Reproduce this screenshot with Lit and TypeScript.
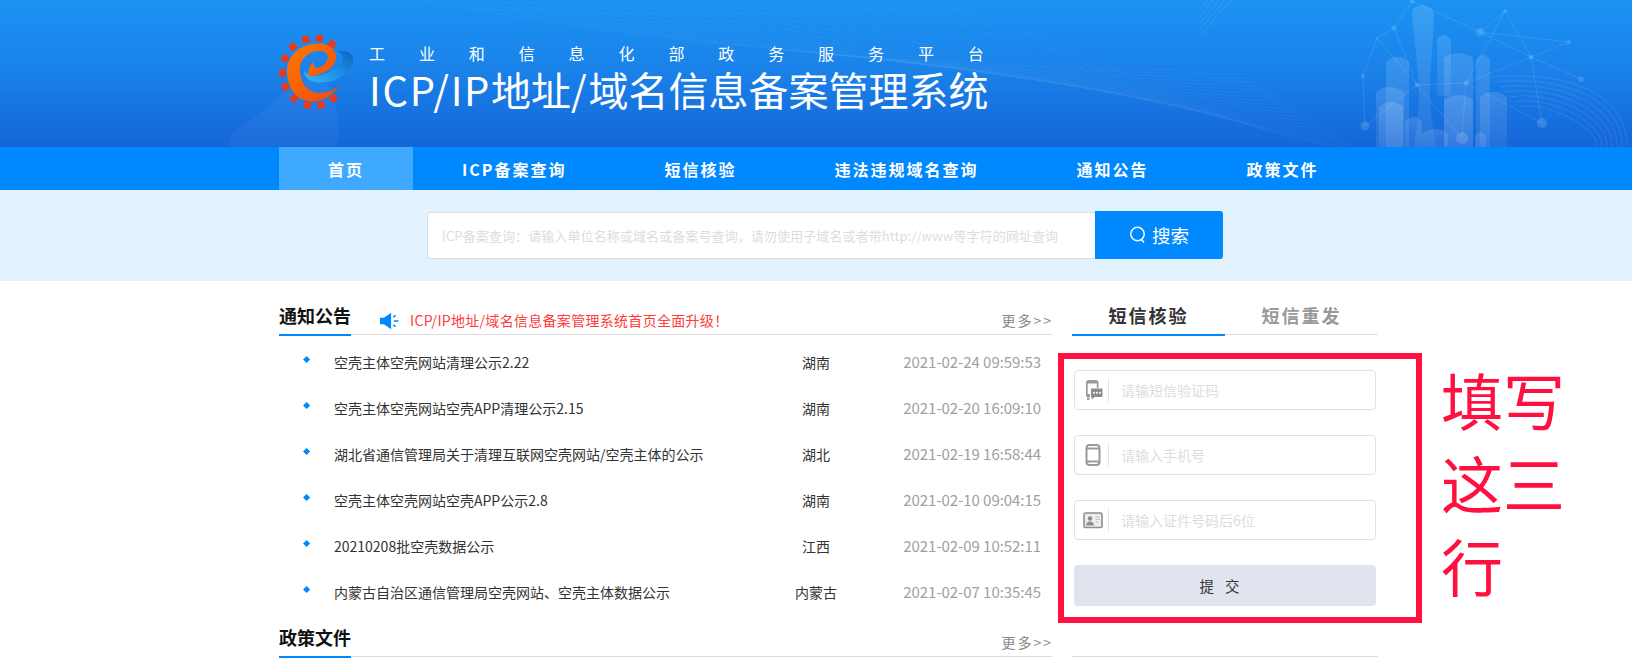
import { LitElement, html, css, svg } from "lit";
import { customElement } from "lit/decorators.js";

const NAV = ["首页", "ICP备案查询", "短信核验", "违法违规域名查询", "通知公告", "政策文件"];
const ROWS = [
  ["空壳主体空壳网站清理公示2.22", "湖南", "2021-02-24 09:59:53"],
  ["空壳主体空壳网站空壳APP清理公示2.15", "湖南", "2021-02-20 16:09:10"],
  ["湖北省通信管理局关于清理互联网空壳网站/空壳主体的公示", "湖北", "2021-02-19 16:58:44"],
  ["空壳主体空壳网站空壳APP公示2.8", "湖南", "2021-02-10 09:04:15"],
  ["20210208批空壳数据公示", "江西", "2021-02-09 10:52:11"],
  ["内蒙古自治区通信管理局空壳网站、空壳主体数据公示", "内蒙古", "2021-02-07 10:35:45"],
];
const SQUARES = [
  [26.7, 4.3], [40.3, 3.3], [53, 9], [14, 11.7], [6, 23.3], [3, 38],
  [6.3, 51.7], [15, 63.3], [28.3, 70], [42, 70], [54.3, 63.3],
];
const NODES: [number, number, number][] = [
  [212, 1, 2.5], [305, 11, 2], [280, 32, 4], [369, 42, 2], [331, 57, 2.5], [194, 28, 2.5],
  [177, 38, 1], [163, 76, 2], [266, 83, 2.5], [381, 79, 3], [342, 123, 5], [165, 126, 4.5],
  [262, 138, 6], [217, 85, 2.5],
];
const EDGES = [
  [0, 5], [5, 6], [6, 7], [7, 11], [0, 2], [2, 1], [2, 3], [3, 4], [4, 8], [8, 13], [13, 11],
  [6, 13], [2, 4], [4, 9], [8, 10], [1, 4], [13, 12], [8, 12], [4, 10], [5, 13], [1, 8],
];
const BLDG: [number, number, number, number][] = [
  [186, 58, 23, 89], [237, 36, 14, 60], [244, 54, 29, 93], [276, 56, 14, 91],
  [176, 88, 28, 59], [179, 103, 24, 44], [244, 96, 29, 51], [280, 93, 27, 54],
  [205, 118, 17, 29], [222, 130, 26, 17], [275, 133, 11, 14],
];

const logo = html`<svg class="logo" viewBox="0 0 75 75" aria-hidden="true">
  <defs>
    <linearGradient id="eg" x1="0" y1="0" x2="1" y2="1"><stop offset="0" stop-color="#ff7a00"/><stop offset="1" stop-color="#f0490c"/></linearGradient>
    <linearGradient id="bg" x1="0" y1="1" x2="1" y2="0"><stop offset="0" stop-color="#35b6f8"/><stop offset=".55" stop-color="#1a8be6"/><stop offset="1" stop-color="#0f62b8"/></linearGradient>
  </defs>
  ${SQUARES.map(([x, y]) => {
    const a = (Math.atan2(y - 37, x - 32) * 180) / Math.PI + 90;
    return svg`<rect x="${x - 3.6}" y="${y - 3.4}" width="7.2" height="6.8" fill="#e8391c" transform="rotate(${a} ${x} ${y})"/>`;
  })}
  <path d="M58 16C68 15 76 19 74 27C71 38 58 47 44 47.500C34 48 25 45 25 36C30 41 38 42 45 39C55 35 63 30 64 23C64 20 61 17 58 16Z" fill="url(#bg)"/>
  <path d="M61 50C52 62 42 67 33 66.500C17 66 8 52 8 36C8 20 22 8 41 8.500C51 9 58 15 57 24C55 34 42 41 30 41C28 38 30 31 34 27C35 31 36 33 38 33C44 32 49 27 49 21C48 17 43 15.500 38 16C28 17 20 26 21 36C22 50 30 58 40 58C48 58 55 55 61 50Z" fill="url(#eg)"/>
</svg>`;

const city = html`<svg class="city" viewBox="0 0 432 147" aria-hidden="true">
  <defs>
    <linearGradient id="bf" x1="0" y1="0" x2="0" y2="1"><stop offset="0" stop-color="#fff" stop-opacity=".13"/><stop offset="1" stop-color="#fff" stop-opacity=".07"/></linearGradient>
  </defs>
  <g stroke="#fff" stroke-opacity=".11" stroke-width="1" fill="none">
    ${EDGES.map(([a, b]) => svg`<line x1="${NODES[a][0]}" y1="${NODES[a][1]}" x2="${NODES[b][0]}" y2="${NODES[b][1]}"/>`)}
  </g>
  ${NODES.map(([x, y, r]) => svg`<circle cx="${x}" cy="${y}" r="${r}" fill="#fff" fill-opacity=".14"/>`)}
  <g fill="url(#bf)">
    ${BLDG.map(([x, y, w, h]) => svg`<path d="M${x} ${y + 4}Q${x + w / 2} ${y - 6} ${x + w} ${y + 4}V${y + h}H${x}Z"/>`)}
    <path d="M212 12C214 3 232 3 234 14C233 45 229 80 230 100C231 120 235 135 236 147H214C216 130 219 115 219 95C219 70 214 40 212 12Z"/>
  </g>
  <g stroke="#fff" stroke-opacity=".1" fill="none">
    ${[0, 5, 10, 15, 20, 25, 30].map((d) => svg`<path d="M${290 + d} ${77 + d}C${370 - d} ${70 + d} ${428 - d} ${95 + d} ${427 - d} 147"/>`)}
    ${[0, 6, 12, 18, 24].map((d) => svg`<path d="M${-1} ${36 - d}L${32 - d} -1"/>`)}
  </g>
</svg>`;

const waves = html`<svg class="waves" viewBox="0 0 1632 147" preserveAspectRatio="none" aria-hidden="true">
  <path d="M230 134C252 120 268 108 282 94C295 84 315 74 326 80C338 105 342 128 337 147H230Z" fill="#fff" fill-opacity=".04"/>
  <g stroke="#fff" stroke-opacity=".04" fill="none">
    ${Array.from({ length: 22 }, (_, i) => svg`<path d="M${420 + i * 24} 0C${640 + i * 24} ${40 + i} ${900 + i * 12} ${70 + i * 2} ${1240 + i * 6} ${70 + i * 4}"/>`)}
  </g>
</svg>`;

const icons = [
  html`<svg class="ic" viewBox="0 0 20 22" aria-hidden="true">
    <path d="M6 1H13A2.500 2.500 0 0 1 15.500 3.500V9H13.800V4.500H4.700V15H7V18.500H4.500A2.500 2.500 0 0 1 3 16V3.500A2.500 2.500 0 0 1 6 1Z" fill="#9a9a9a"/>
    <path d="M9 9.500H18.500A1 1 0 0 1 19.500 10.500V17A1 1 0 0 1 18.500 18H11.500L8.500 20.500V18A1 1 0 0 1 8 17V10.500A1 1 0 0 1 9 9.500Z" fill="#8c8c8c"/>
    <circle cx="11" cy="13.700" r="1" fill="#fff"/><circle cx="14" cy="13.700" r="1" fill="#fff"/><circle cx="17" cy="13.700" r="1" fill="#fff"/>
    <circle cx="5.200" cy="20" r="1.300" fill="#9a9a9a"/>
  </svg>`,
  html`<svg class="ic" viewBox="0 0 20 22" aria-hidden="true">
    <rect x="3.500" y="1" width="13" height="20" rx="3" fill="none" stroke="#9a9a9a" stroke-width="2"/>
    <path d="M3.500 4.500H16.500M3.500 17.500H16.500" stroke="#9a9a9a" stroke-width="2"/>
  </svg>`,
  html`<svg class="ic" viewBox="0 0 20 22" aria-hidden="true">
    <rect x="1" y="4" width="18" height="14.500" rx="1.500" fill="#eeeeee" stroke="#8f8f8f" stroke-width="1.600"/>
    <circle cx="7" cy="9.500" r="2.300" fill="#8f8f8f"/>
    <path d="M3 16.500C3 13.500 5 12.500 7 12.500S11 13.500 11 16.500Z" fill="#8f8f8f"/>
    <path d="M12.500 8H17M12.500 10.500H17M12.500 13H15" stroke="#c4c4c4" stroke-width="1.200"/>
  </svg>`,
];

@customElement("app-root")
export class AppRoot extends LitElement {
  static styles = css`
    :host {
      display: block;
      position: relative;
      width: 1632px;
      height: 665px;
      overflow: hidden;
      background: #fff;
      font-family: "Noto Sans CJK SC", "Noto Sans", sans-serif;
      color: #333;
    }
    * { box-sizing: border-box; }
    .banner {
      position: relative;
      height: 147px;
      padding: 35px 0 0 279px;
      display: flex;
      background: linear-gradient(180deg, #1b93f3 0%, #1a83ea 45%, #1566d8 100%);
      overflow: hidden;
    }
    .waves { position: absolute; inset: 0; width: 100%; height: 100%; }
    .city { position: absolute; left: 1200px; top: 0; width: 432px; height: 147px; }
    .logo { position: relative; width: 75px; height: 75px; flex: none; }
    .titles { position: relative; margin-left: 15px; color: #fff; }
    .sub { font-size: 16px; line-height: 20px; letter-spacing: 33.9px; margin-top: 8px; white-space: nowrap; }
    .main-title { font-size: 40px; line-height: 50px; margin-top: 1px; white-space: nowrap; }
    .main-title i { font-style: normal; letter-spacing: 1.7px; }
    nav { height: 43px; background: #0088ff; padding-left: 279px; display: flex; }
    nav a {
      padding: 0 49px;
      color: #fff;
      font-size: 16px;
      font-weight: 700;
      letter-spacing: 2px;
      line-height: 44px;
      white-space: nowrap;
    }
    nav a.on { background: #3fa9ff; }
    .search { height: 91px; background: #e3f2ff; padding: 21px 0 0 427px; display: flex; align-items: flex-start; }
    .search input {
      width: 668px;
      height: 47px;
      margin-top: 1px;
      border: 1px solid #d9dee5;
      border-right: 0;
      border-radius: 3px 0 0 3px;
      padding: 0 14px;
      font: 13px "Noto Sans CJK SC", sans-serif;
      letter-spacing: 0.1px;
      background: #fff;
      outline: none;
    }
    .search input::placeholder { color: #dcdde0; opacity: 1; }
    .search button {
      width: 128px;
      height: 48px;
      border: 0;
      border-radius: 0 3px 3px 0;
      background: #0088ff;
      color: #fff;
      font: 18.500px "Noto Sans CJK SC", sans-serif;
      display: flex;
      align-items: center;
      justify-content: center;
      gap: 5px;
      padding: 0;
    }
    .search button svg { width: 18px; height: 18px; }
    main { display: flex; gap: 20px; padding: 20px 0 0 279px; }
    .left { width: 773px; flex: none; }
    .right { width: 306px; flex: none; }
    .head {
      height: 34px;
      border-bottom: 1px solid #dcdcdc;
      display: flex;
      align-items: flex-start;
    }
    .head h2 {
      margin: 0;
      width: 72px;
      height: 35px;
      border-bottom: 2px solid #0088ff;
      font-size: 18px;
      line-height: 28px;
      font-weight: 700;
      color: #111;
      white-space: nowrap;
      flex: none;
    }
    .speaker { width: 20px; height: 18px; margin: 11px 0 0 29px; flex: none; }
    .notice { color: #ff3b3b; font-size: 14px; line-height: 39px; letter-spacing: 0.3px; margin-left: 10px; white-space: nowrap; }
    .more { margin-left: auto; color: #888; font-size: 14px; line-height: 38px; letter-spacing: 2px; margin-right: -1px; white-space: nowrap; }
    ul { list-style: none; margin: 4px 0 0; padding: 0; height: 284px; }
    li {
      height: 46px;
      display: grid;
      grid-template-columns: 55px 432px 100px 1fr;
      align-items: center;
      font-size: 14px;
      line-height: 46px;
    }
    .dia {
      width: 5.200px;
      height: 5.200px;
      background: #0088ff;
      transform: translateY(-2px) rotate(45deg);
      margin-left: 24.500px;
    }
    .t { white-space: nowrap; }
    .r { text-align: center; }
    .d { text-align: right; padding-right: 11px; font-size: 15px; letter-spacing: -0.05px; color: #a0a0a0; white-space: nowrap; }
    .tabs { display: flex; height: 34px; border-bottom: 1px solid #dcdcdc; }
    .tab {
      width: 153px;
      height: 35px;
      text-align: center;
      font-size: 18px;
      font-weight: 700;
      letter-spacing: 2px;
      line-height: 28px;
      color: #999;
    }
    .tab.on { color: #333; border-bottom: 2px solid #0088ff; }
    form { padding: 35px 2px 0; display: flex; flex-direction: column; gap: 25px; }
    .field {
      height: 40px;
      border: 1px solid #dfe1e8;
      border-radius: 4px;
      display: flex;
      align-items: center;
    }
    .ic { width: 20px; height: 22px; margin-left: 8px; flex: none; }
    .sep { width: 1px; height: 24px; background: #e4e6ec; margin-left: 5px; flex: none; }
    .field input {
      flex: 1;
      min-width: 0;
      border: 0;
      outline: none;
      padding: 0 0 0 12px;
      font: 14px "Noto Sans CJK SC", sans-serif;
      background: transparent;
    }
    .field input::placeholder { color: #dcdde0; opacity: 1; }
    .submit {
      height: 41px;
      border: 0;
      border-radius: 4px;
      background: #e0e4ee;
      color: #333;
      font: 14.500px "Noto Sans CJK SC", sans-serif;
      letter-spacing: 11px;
      padding: 0;
    }
    .rule { height: 1px; background: #dcdcdc; margin-top: 50px; }
    .mark {
      position: absolute;
      left: 1058px;
      top: 353px;
      width: 364px;
      height: 270px;
      border: 6px solid #ff1040;
      pointer-events: none;
    }
    .note {
      position: absolute;
      left: 1441px;
      top: 358px;
      width: 130px;
      color: #ff1040;
      font-size: 62px;
      line-height: 83px;
      font-weight: 400;
    }
  `;

  render() {
    return html`
      <header class="banner">
        ${waves}${city}${logo}
        <div class="titles">
          <div class="sub">工业和信息化部政务服务平台</div>
          <div class="main-title"><i>ICP/IP</i>地址<i>/</i>域名信息备案管理系统</div>
        </div>
      </header>
      <nav>${NAV.map((n, i) => html`<a class=${i === 0 ? "on" : ""}>${n}</a>`)}</nav>
      <section class="search">
        <input placeholder="ICP备案查询：请输入单位名称或域名或备案号查询，请勿使用子域名或者带http://www等字符的网址查询" />
        <button>
          <svg viewBox="0 0 18 18" fill="none" stroke="#fff" stroke-width="1.500" aria-hidden="true"><circle cx="8.500" cy="8" r="6.700"/><path d="M12.500 13.500L15 16.500"/></svg>
          搜索
        </button>
      </section>
      <main>
        <div class="left">
          <div class="head">
            <h2>通知公告</h2>
            <svg class="speaker" viewBox="0 0 18 16" aria-hidden="true">
              <path d="M0 5H3.500L10 .5V15.500L3.500 11H0Z" fill="#0088ff"/>
              <path d="M12 4.500L14 3M12.500 8H16.500M12 11.500L14 13" stroke="#0088ff" stroke-width="1.400" fill="none"/>
            </svg>
            <span class="notice">ICP/IP地址/域名信息备案管理系统首页全面升级！</span>
            <span class="more">更多>></span>
          </div>
          <ul>
            ${ROWS.map(
              ([t, r, d]) => html`<li><span class="dia"></span><span class="t">${t}</span><span class="r">${r}</span><span class="d">${d}</span></li>`
            )}
          </ul>
          <div class="head"><h2>政策文件</h2><span class="more">更多>></span></div>
        </div>
        <div class="right">
          <div class="tabs"><div class="tab on">短信核验</div><div class="tab">短信重发</div></div>
          <form>
            ${["请输短信验证码", "请输入手机号", "请输入证件号码后6位"].map(
              (p, i) => html`<label class="field">${icons[i]}<span class="sep"></span><input placeholder=${p} /></label>`
            )}
            <button class="submit" type="button">提交</button>
          </form>
          <div class="rule"></div>
        </div>
      </main>
      <div class="mark"></div>
      <div class="note">填写这三行</div>
    `;
  }
}
